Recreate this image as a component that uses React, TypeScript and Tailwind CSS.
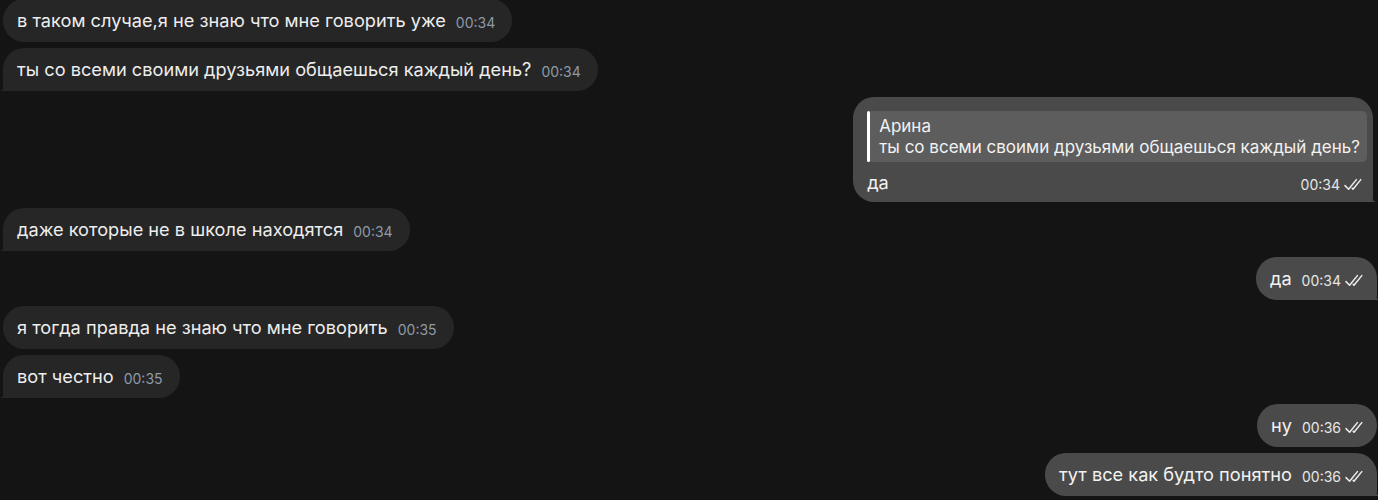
import React from "react";

type Msg = {
  out: boolean;
  text: string;
  time: string;
  tail?: boolean;
  reply?: { name: string; text: string };
};

const messages: Msg[] = [
  { out: false, text: "в таком случае,я не знаю что мне говорить уже", time: "00:34" },
  { out: false, text: "ты со всеми своими друзьями общаешься каждый день?", time: "00:34", tail: true },
  {
    out: true,
    text: "да",
    time: "00:34",
    tail: true,
    reply: { name: "Арина", text: "ты со всеми своими друзьями общаешься каждый день?" },
  },
  { out: false, text: "даже которые не в школе находятся", time: "00:34", tail: true },
  { out: true, text: "да", time: "00:34", tail: true },
  { out: false, text: "я тогда правда не знаю что мне говорить", time: "00:35" },
  { out: false, text: "вот честно", time: "00:35", tail: true },
  { out: true, text: "ну", time: "00:36" },
  { out: true, text: "тут все как будто понятно", time: "00:36", tail: true },
];

const Checks = () => (
  <svg width="20" height="13" viewBox="0 0 20 13" fill="none" className="ml-[4px]">
    <path d="M1 7.6 L4.6 11.2 L12.4 1.6" stroke="#ececec" strokeWidth="1.5" strokeLinecap="round" strokeLinejoin="round" />
    <path d="M8.2 10.4 L9 11.2 L16.8 1.6" stroke="#ececec" strokeWidth="1.5" strokeLinecap="round" strokeLinejoin="round" />
  </svg>
);

const TailLeft = () => (
  <svg width="10" height="16" viewBox="0 0 10 16" className="absolute left-[-3px] bottom-0">
    <path d="M10 0 L10 16 L0 16 C4 14.5 6.5 11 7 6 Z" fill="#262626" />
  </svg>
);

const TailRight = () => (
  <svg width="10" height="16" viewBox="0 0 10 16" className="absolute right-[-3px] bottom-0">
    <path d="M0 0 L0 16 L10 16 C6 14.5 3.5 11 3 6 Z" fill="#4a4a4a" />
  </svg>
);

const Incoming = ({ m }: { m: Msg }) => (
  <div className="flex pl-[3px]">
    <div
      className={
        "relative flex h-[43px] items-center bg-[#262626] pl-[14px] pr-[17px] " +
        (m.tail ? "rounded-[21px] rounded-bl-[4px]" : "rounded-[21px]")
      }
    >
      {m.tail && <TailLeft />}
      <span className="text-[18.2px] text-[#ededed]">{m.text}</span>
      <span className="ml-[10px] mt-[4px] text-[14px] text-[#8e9aa6]">{m.time}</span>
    </div>
  </div>
);

const Outgoing = ({ m }: { m: Msg }) => {
  const shape = m.tail ? "rounded-[21px] rounded-br-[4px]" : "rounded-[21px]";
  if (m.reply) {
    return (
      <div className="flex justify-end pr-[5px]">
        <div className={"relative flex flex-col bg-[#4a4a4a] pl-[14px] pr-[6px] pt-[14px] " + shape}>
          {m.tail && <TailRight />}
          <div className="flex h-[51px] rounded-[5px] bg-[#5d5d5d]">
            <div className="w-[3px] rounded-full bg-white" />
            <div className="flex flex-col justify-center pl-[9px] pr-[7px] leading-[21px]">
              <span className="text-[17px] text-[#f2f2f2]">{m.reply.name}</span>
              <span className="text-[17px] text-[#f2f2f2]">{m.reply.text}</span>
            </div>
          </div>
          <div className="flex h-[40px] items-start justify-between pr-[3px]">
            <span className="mt-[7px] text-[18.2px] text-[#f2f2f2]">{m.text}</span>
            <span className="mt-[12px] flex items-center text-[14px] text-[#e6e6e6]">
              {m.time}
              <Checks />
            </span>
          </div>
        </div>
      </div>
    );
  }
  return (
    <div className="flex justify-end pr-[1px]">
      <div className={"relative flex h-[43px] items-center bg-[#4a4a4a] pl-[14px] pr-[12px] " + shape}>
        {m.tail && <TailRight />}
        <span className="text-[18.2px] text-[#f2f2f2]">{m.text}</span>
        <span className="ml-[10px] mt-[4px] flex items-center text-[14px] text-[#e6e6e6]">
          {m.time}
          <Checks />
        </span>
      </div>
    </div>
  );
};

export default function App() {
  return (
    <div
      className="h-[500px] w-[1378px] overflow-hidden bg-[#141414]"
      style={{ fontFamily: "Inter, 'Noto Sans', sans-serif" }}
    >
      <div className="mt-[-1px] flex flex-col gap-[6px]">
        {messages.map((m, i) => (m.out ? <Outgoing key={i} m={m} /> : <Incoming key={i} m={m} />))}
      </div>
    </div>
  );
}
